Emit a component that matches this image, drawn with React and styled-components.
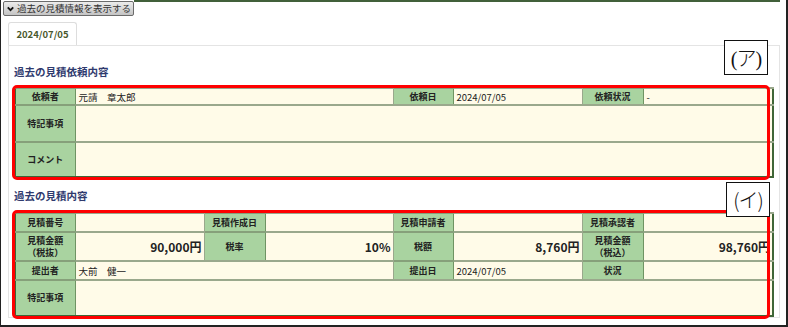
import React from 'react';
import styled, { createGlobalStyle } from 'styled-components';

const GlobalStyle = createGlobalStyle`
  html, body {
    margin: 0;
    padding: 0;
    background: #fff;
  }
  body {
    font-family: "Noto Sans CJK JP", "Noto Sans", sans-serif;
    color: #222;
  }
`;

const Frame = styled.div`
  position: relative;
  box-sizing: border-box;
  width: 788px;
  height: 327px;
  border-left: 1px solid #222;
  border-right: 2px solid #222;
  border-bottom: 2px solid #222;
  overflow: hidden;
`;

const Header = styled.div`
  display: flex;
  align-items: flex-start;
  height: 22px;
`;

const ToggleButton = styled.button`
  display: flex;
  align-items: center;
  gap: 3px;
  margin: 1px 0 0 2px;
  height: 15px;
  width: 131px;
  padding: 0 2px 0 3px;
  box-sizing: border-box;
  border: 1px solid #6b6b6b;
  border-radius: 2px;
  background: linear-gradient(#ececec, #c4c4c4);
  font-family: "Noto Sans CJK JP", sans-serif;
  font-size: 9.5px;
  line-height: 13px;
  color: #333;
  white-space: nowrap;
  cursor: pointer;
`;

const TopRule = styled.div`
  flex: 1;
  height: 0;
  border-top: 2px solid #41603a;
  margin-right: 6px;
`;

const TabBar = styled.div`
  display: flex;
  padding-left: 7px;
`;

const Tab = styled.div`
  width: 69px;
  height: 23px;
  box-sizing: border-box;
  border: 1px solid #ddd;
  border-bottom: none;
  border-radius: 3px 3px 0 0;
  font-size: 9.5px;
  font-weight: bold;
  color: #48582c;
  text-align: center;
  line-height: 22px;
  background: #fff;
`;

const Panel = styled.div`
  margin: 0 6px 0 7px;
  height: 273px;
  box-sizing: border-box;
  border: 1px solid #e4e4e4;
  padding: 18px 5px 0 5px;
`;

const SectionTitle = styled.h3`
  margin: ${(p) => (p.$first ? '0' : '10px')} 0 ${(p) => (p.$first ? '7px' : '8px')} 0;
  font-size: 10.5px;
  line-height: 16px;
  font-weight: bold;
  color: #2f3a6e;
`;

const TableWrap = styled.div`
  position: relative;
  width: 758px;
`;

const RedMark = styled.div`
  position: absolute;
  left: -2px;
  top: -2px;
  right: 2px;
  bottom: -2px;
  border: 3px solid #f00;
  border-radius: 5px;
  pointer-events: none;
`;

const Table = styled.table`
  width: 758px;
  table-layout: fixed;
  border-collapse: collapse;
  border: 2px solid #3f6636;
`;

const Row = styled.tr`
  height: ${(p) => p.$h}px;
`;

const Label = styled.th`
  background: #a9d3a0;
  border: 1px solid #6f9463;
  border-top: 2px solid #86a07a;
  font-size: 9px;
  line-height: 12px;
  font-weight: bold;
  color: #222;
  text-align: center;
  padding: 0;
`;

const Value = styled.td`
  background: #fffbe8;
  border: 1px solid #9aa88c;
  border-top: 2px solid #9aa88c;
  font-size: ${(p) => (p.$amount ? '12px' : '9.5px')};
  font-weight: ${(p) => (p.$amount ? 'bold' : 'normal')};
  text-align: ${(p) => (p.$amount ? 'right' : 'left')};
  color: #222;
  padding: 0 2px 0 3px;
  white-space: nowrap;
`;

const Note = styled.div`
  position: absolute;
  width: 44px;
  height: 35px;
  box-sizing: border-box;
  border: 1px solid #111;
  background: #fff;
  display: flex;
  align-items: center;
  justify-content: center;
  font-size: 20px;
  font-weight: 300;
  color: #111;
  letter-spacing: -1px;
  font-family: ${(p) => (p.$serif ? '"Liberation Serif", "Noto Sans CJK JP", serif' : '"Noto Sans CJK JP", sans-serif')};
`;

const Cols = () => (
  <colgroup>
    <col style={{ width: 60 }} />
    <col style={{ width: 129 }} />
    <col style={{ width: 61 }} />
    <col style={{ width: 128 }} />
    <col style={{ width: 60 }} />
    <col style={{ width: 129 }} />
    <col style={{ width: 61 }} />
    <col style={{ width: 130 }} />
  </colgroup>
);

const Chevron = () => (
  <svg width="11" height="8" viewBox="0 0 11 8">
    <path d="M1.2 1.3 L5.5 5.8 L9.8 1.3" fill="none" stroke="#111" strokeWidth="2.8" />
  </svg>
);

export default function App() {
  return (
    <>
      <GlobalStyle />
      <Frame>
        <Header>
          <ToggleButton type="button">
            <Chevron />
            過去の見積情報を表示する
          </ToggleButton>
          <TopRule />
        </Header>
        <TabBar>
          <Tab>2024/07/05</Tab>
        </TabBar>
        <Panel>
          <SectionTitle $first>過去の見積依頼内容</SectionTitle>
          <TableWrap>
            <Table>
              <Cols />
              <tbody>
                <Row $h={17}>
                  <Label>依頼者</Label>
                  <Value colSpan={3}>元請　章太郎</Value>
                  <Label>依頼日</Label>
                  <Value>2024/07/05</Value>
                  <Label>依頼状況</Label>
                  <Value>-</Value>
                </Row>
                <Row $h={37}>
                  <Label>特記事項</Label>
                  <Value colSpan={7} />
                </Row>
                <Row $h={35}>
                  <Label>コメント</Label>
                  <Value colSpan={7} />
                </Row>
              </tbody>
            </Table>
            <RedMark />
          </TableWrap>

          <SectionTitle>過去の見積内容</SectionTitle>
          <TableWrap>
            <Table>
              <Cols />
              <tbody>
                <Row $h={19}>
                  <Label>見積番号</Label>
                  <Value />
                  <Label>見積作成日</Label>
                  <Value />
                  <Label>見積申請者</Label>
                  <Value />
                  <Label>見積承認者</Label>
                  <Value />
                </Row>
                <Row $h={29}>
                  <Label>見積金額<br />（税抜）</Label>
                  <Value $amount>90,000円</Value>
                  <Label>税率</Label>
                  <Value $amount>10%</Value>
                  <Label>税額</Label>
                  <Value $amount>8,760円</Value>
                  <Label>見積金額<br />（税込）</Label>
                  <Value $amount>98,760円</Value>
                </Row>
                <Row $h={19}>
                  <Label>提出者</Label>
                  <Value colSpan={3}>大前　健一</Value>
                  <Label>提出日</Label>
                  <Value>2024/07/05</Value>
                  <Label>状況</Label>
                  <Value />
                </Row>
                <Row $h={36}>
                  <Label>特記事項</Label>
                  <Value colSpan={7} />
                </Row>
              </tbody>
            </Table>
            <RedMark />
          </TableWrap>
        </Panel>
        <Note $serif style={{ left: 723, top: 40 }}>(ア)</Note>
        <Note style={{ left: 725, top: 182 }}>(イ)</Note>
      </Frame>
    </>
  );
}
